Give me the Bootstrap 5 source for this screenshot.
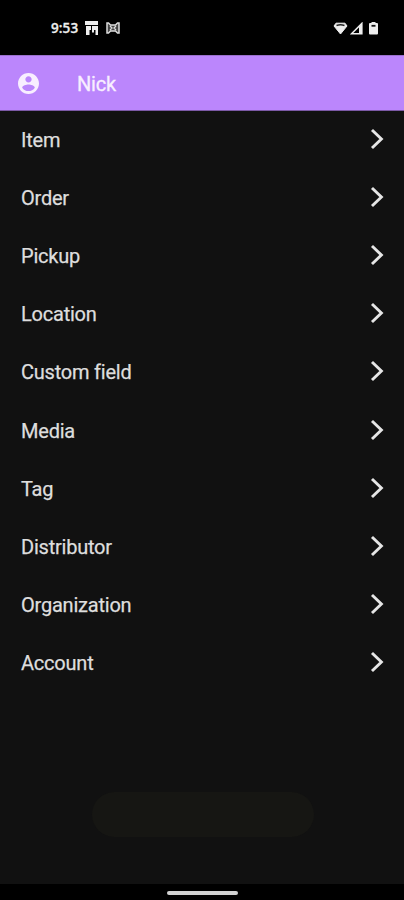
<!DOCTYPE html>
<html lang="en" data-bs-theme="dark">
<head>
<meta charset="utf-8">
<meta name="viewport" content="width=device-width, initial-scale=1">
<title>Nick</title>
<link href="https://cdn.jsdelivr.net/npm/bootstrap@5.3.0/dist/css/bootstrap.min.css" rel="stylesheet">
<style>
body { font-family: Roboto, "Liberation Sans", sans-serif; background: #111; height: 900px; overflow: hidden; }
svg { display: block; flex: none; }
.status-bar { height: 55px; padding: 1px 26px 0 51px; background: #000; color: #eee; }
.clock { font: 600 13.5px/20px "Open Sans", sans-serif; letter-spacing: .1px; width: 34px; white-space: nowrap; -webkit-text-stroke: .3px; }
.signal { margin: 0 6px 0 2px; }
.app-bar { height: 56px; padding: 0 18px; background: #bb86fc; border-top: 1px solid #9a70cd; border-bottom: 1px solid #7c5aa6; color: #f8eeff; }
.app-title { font-size: 20px; letter-spacing: -.2px; margin-left: 38px; line-height: 24px; padding-top: 1px; -webkit-text-stroke: .3px; }
.menu-row { height: 58.1px; padding: 0 20px 0 21px; background: transparent; color: #dedede; font-size: 20px; letter-spacing: -.22px; line-height: 24px; -webkit-text-stroke: .25px; }
.menu-row svg { margin-bottom: 2px; }
.toast-pill { width: 222px; height: 45px; background: #161613; margin: 0 0 47px 92px; }
.gesture-bar { height: 16px; background: #000; padding: 2px 0 0 1px; }
.handle { width: 71px; height: 4px; background: #d2d2d2; }
</style>
<script src="https://cdn.jsdelivr.net/npm/bootstrap@5.3.0/dist/js/bootstrap.bundle.min.js" defer></script>
</head>
<body class="d-flex flex-column m-0">
<svg width="0" height="0" class="position-absolute" aria-hidden="true">
  <symbol id="chevron" viewBox="0 0 14 22"><path d="M2 2 11.400 11 2 20" fill="none" stroke="#e6e6e6" stroke-width="2.900"/></symbol>
</svg>
<header class="status-bar d-flex align-items-center flex-shrink-0">
  <span class="clock">9:53</span>
  <svg width="13" height="14" viewBox="0 0 13 14" fill="#eee"><path d="M0 0h13v4H0zM1 5h5v4H4.500v5H1zM7 5h6v9h-2.500V9H9v2.500H7z"/></svg>
  <svg class="ms-2" width="14" height="12" viewBox="0 0 14 12"><path d="M1 1v10h1.500l2-2h5l2 2H13V1h-1.500l-2 2h-5l-2-2z" fill="#444" stroke="#ddd" stroke-width="1.500"/><path d="M4 4l2 2-2 2M10 4 8 6l2 2" fill="none" stroke="#ddd" stroke-width="1.300"/></svg>
  <svg class="ms-auto" width="15" height="13" viewBox="0 0 15 13"><path d="M3 1.200h9l2 2.800-6.500 8L1 4z" fill="#eee" stroke="#eee" stroke-linejoin="round"/><path d="M3.500 3.500q4-1.500 8 0" fill="none" stroke="#222" stroke-width="1.500"/></svg>
  <svg class="signal" width="13" height="13" viewBox="0 0 13 13"><path d="M11.800 1.500v10.300H1.500z" fill="none" stroke="#eee" stroke-width="1.600"/><path d="M9 4.500l3-3V12H9z" fill="#eee"/></svg>
  <svg width="9" height="14" viewBox="0 0 9 14"><path d="M2.500 1h4v1H8q1 0 1 1v9.500q0 1-1 1H1q-1 0-1-1V3q0-1 1-1h1.500z" fill="#eee"/><path d="M2.500 4.800h4" stroke="#111" stroke-width="1.800"/></svg>
</header>
<nav class="app-bar d-flex align-items-center flex-shrink-0">
  <svg width="21" height="21" viewBox="2 2 20 20" fill="#f8eeff"><path d="M12 2C6.480 2 2 6.480 2 12s4.480 10 10 10 10-4.480 10-10S17.520 2 12 2zm0 3c1.660 0 3 1.340 3 3s-1.340 3-3 3-3-1.340-3-3 1.340-3 3-3zm0 14.200c-2.500 0-4.710-1.280-6-3.220.03-1.990 4-3.080 6-3.080 1.990 0 5.970 1.090 6 3.080-1.290 1.940-3.500 3.220-6 3.220z"/></svg>
  <span class="app-title">Nick</span>
</nav>
<main class="list-group list-group-flush flex-shrink-0">
  <a class="menu-row list-group-item border-0 d-flex align-items-center justify-content-between">Item<svg width="14" height="22"><use href="#chevron"/></svg></a>
  <a class="menu-row list-group-item border-0 d-flex align-items-center justify-content-between">Order<svg width="14" height="22"><use href="#chevron"/></svg></a>
  <a class="menu-row list-group-item border-0 d-flex align-items-center justify-content-between">Pickup<svg width="14" height="22"><use href="#chevron"/></svg></a>
  <a class="menu-row list-group-item border-0 d-flex align-items-center justify-content-between">Location<svg width="14" height="22"><use href="#chevron"/></svg></a>
  <a class="menu-row list-group-item border-0 d-flex align-items-center justify-content-between">Custom field<svg width="14" height="22"><use href="#chevron"/></svg></a>
  <a class="menu-row list-group-item border-0 d-flex align-items-center justify-content-between">Media<svg width="14" height="22"><use href="#chevron"/></svg></a>
  <a class="menu-row list-group-item border-0 d-flex align-items-center justify-content-between">Tag<svg width="14" height="22"><use href="#chevron"/></svg></a>
  <a class="menu-row list-group-item border-0 d-flex align-items-center justify-content-between">Distributor<svg width="14" height="22"><use href="#chevron"/></svg></a>
  <a class="menu-row list-group-item border-0 d-flex align-items-center justify-content-between">Organization<svg width="14" height="22"><use href="#chevron"/></svg></a>
  <a class="menu-row list-group-item border-0 d-flex align-items-center justify-content-between">Account<svg width="14" height="22"><use href="#chevron"/></svg></a>
</main>
<div class="toast-pill rounded-pill mt-auto flex-shrink-0"></div>
<footer class="gesture-bar d-flex align-items-center justify-content-center flex-shrink-0"><div class="handle rounded-pill"></div></footer>
</body>
</html>
